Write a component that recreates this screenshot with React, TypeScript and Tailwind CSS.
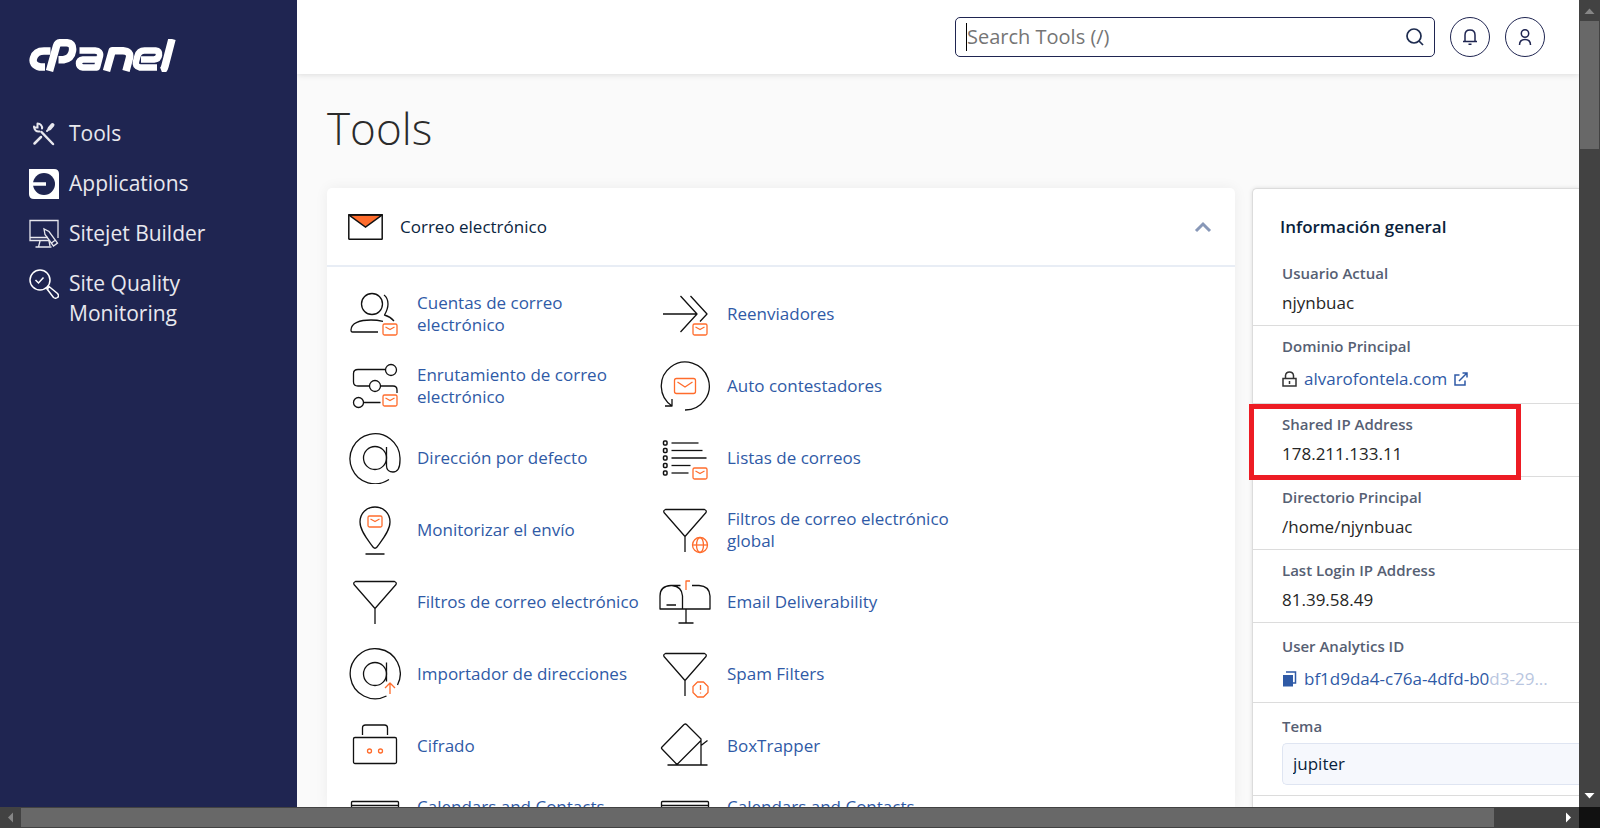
import React from 'react';

const MiniMail: React.FC<{ x: number; y: number }> = ({ x, y }) => (
    <g stroke="#ff6c2c">
        <rect x={x} y={y} width="14" height="11" rx="1.5" />
        <path d={`M${x + 2.5} ${y + 3}l4.5 2.5 4.5-2.5`} />
    </g>
);

const funnel = 'M5.500 4.500h39q2.500 1 1.500 3L25 31.500 4 7.500q-1-2 1.500-3zM25 31.500V47';

const icons: Record<string, React.ReactNode> = {
    accounts: (
        <>
            <circle cx="22" cy="15" r="10.500" />
            <path d="M28 43H2.500q-1.500 0-1.500-2C1 34 10 31 21 31q6 0 12 1.300M34 6q4 3 4 9 0 5-3.500 11Q40 27.500 44 32" />
            <MiniMail x={33} y={35} />
        </>
    ),
    routing: (
        <>
            <circle cx="41" cy="9" r="5.500" />
            <circle cx="25" cy="25" r="5.500" />
            <circle cx="8.500" cy="41.500" r="5" />
            <path d="M35.500 8.500H8q-4.500 0-4.500 4V21q0 4 4.500 4h11.500M30.500 25H43q4 0 4 4v3M13.500 41.500h17" />
            <MiniMail x={33} y={34} />
        </>
    ),
    at: (
        <>
            <circle cx="25" cy="25" r="11.500" />
            <path d="M39 46.500a25 25 0 1 1 11-21.500v2c0 8-3 12-7 12-3.500 0-6.500-2-6.500-6V14" />
        </>
    ),
    track: (
        <>
            <path d="M25 2c8.500 0 15 6.500 15 15 0 9-8 18-13 25q-2 2.500-4 0C18 35 10 26 10 17 10 8.500 16.500 2 25 2zM15.500 49h19" />
            <MiniMail x={18} y={11} />
        </>
    ),
    filter: <path d={funnel} />,
    importer: (
        <>
            <circle cx="25" cy="25" r="11.500" />
            <path d="M36.500 13.500v19M36.500 47A25 25 0 1 1 47.500 36" />
            <path d="M40 45V34m-5 5 5-5 5 5" stroke="#ff6c2c" />
        </>
    ),
    encryption: (
        <>
            <rect x="3.500" y="16.500" width="43" height="26" rx="1.500" />
            <path d="M12.500 14V7q0-3 3-3h19q3 0 3 3v7" />
            <circle cx="19.500" cy="30" r="2" stroke="#ff6c2c" />
            <circle cx="30.500" cy="30" r="2" stroke="#ff6c2c" />
        </>
    ),
    calendar: (
        <>
            <rect x="1.500" y="8.500" width="47" height="36" rx="1" />
            <path d="M2 12.500h46" />
        </>
    ),
    forward: (
        <>
            <path d="M3 25h34M20.500 7 37 25 20.500 43M30.500 7 47 25l-7 7.500" />
            <MiniMail x={33} y={35} />
        </>
    ),
    auto: (
        <>
            <path d="M25 49a24 24 0 1 0-13-4M5 45h7v-7" />
            <rect x="14.500" y="17.500" width="21" height="15" rx="2" stroke="#ff6c2c" />
            <path d="m17.500 21 7.500 5 7.500-5" stroke="#ff6c2c" />
        </>
    ),
    lists: (
        <>
            {[10, 17.5, 25, 32.5, 40].map((y, i) => (
                <React.Fragment key={y}>
                    <rect x="3.500" y={y - 2} width="3.500" height="4" rx="1" strokeWidth="1.500" />
                    <path d={`M11.500 ${y}h${[27, 31, 35, 19, 17][i]}`} />
                </React.Fragment>
            ))}
            <MiniMail x={33} y={35} />
        </>
    ),
    globalFilter: (
        <>
            <path d={funnel} />
            <g stroke="#ff6c2c">
                <circle cx="40" cy="40" r="7.500" />
                <ellipse cx="40" cy="40" rx="3.500" ry="7.500" />
                <path d="M32.500 40h15" />
            </g>
        </>
    ),
    mailbox: (
        <>
            <path d="M20.500 8.500H11Q0 9 0 19v13h22.500V19Q22 9.500 12 8.500M22.500 32H50V19q-.5-10-11-10.500h-7M26 32v14M18.500 46h15M6.500 28H16" />
            <path d="M26 13V4h4" stroke="#ff6c2c" />
        </>
    ),
    spam: (
        <>
            <path d={funnel} />
            <path d="m37.500 33 6 0 4.500 4.500v6L43.500 48h-6L33 43.500v-6zM40.500 36v5M40.500 43.500v1" stroke="#ff6c2c" />
        </>
    ),
    trapper: <path d="M24 3.500 2 26q-1 1 0 2l15 15.500L41 19.500v24M24 3.500q1.500-1 2.500 0L41 18v6.500l6.500-5M7.500 44h40" />,
};

const tools = [
    { icon: 'accounts', label: 'Cuentas de correo electrónico' },
    { icon: 'forward', label: 'Reenviadores' },
    { icon: 'routing', label: 'Enrutamiento de correo electrónico' },
    { icon: 'auto', label: 'Auto contestadores' },
    { icon: 'at', label: 'Dirección por defecto' },
    { icon: 'lists', label: 'Listas de correos' },
    { icon: 'track', label: 'Monitorizar el envío' },
    { icon: 'globalFilter', label: 'Filtros de correo electrónico global' },
    { icon: 'filter', label: 'Filtros de correo electrónico' },
    { icon: 'mailbox', label: 'Email Deliverability' },
    { icon: 'importer', label: 'Importador de direcciones' },
    { icon: 'spam', label: 'Spam Filters' },
    { icon: 'encryption', label: 'Cifrado' },
    { icon: 'trapper', label: 'BoxTrapper' },
    { icon: 'calendar', label: 'Calendars and Contacts Configuration' },
    { icon: 'calendar', label: 'Calendars and Contacts Sharing' },
];

const navItems = [
    {
        label: 'Tools',
        icon: (
            <g stroke="#e8e8ee" strokeWidth="2" strokeLinecap="round">
                <path d="M12.500 13 24 25" strokeWidth="2.500" />
                <path d="M8.500 4.500c3 0 5 2.500 4.500 5M5 7.500c0 3.500 2.500 5.500 5.500 5M8.500 4.500v4H5" strokeWidth="2" />
                <path d="M5.500 24.500 12 18" strokeWidth="2.500" />
                <path d="M18 12l3-3" />
                <path d="m20.500 9.500 3-3.500" strokeWidth="4" />
            </g>
        ),
    },
    {
        label: 'Applications',
        icon: (
            <>
                <path d="M0 0h25q5 0 5 5v25H5q-5 0-5-5z" fill="#fff" />
                <circle cx="15" cy="15" r="11" fill="#1f2551" />
                <path d="M0 15h17" stroke="#fff" strokeWidth="3.500" />
            </>
        ),
    },
    {
        label: 'Sitejet Builder',
        icon: (
            <g stroke="#e8e8ee" strokeWidth="1.300">
                <path d="M20 21.500H1V1.500h28V19M1 18.500h18M11 22l-1.500 6M20 22l1 5M6.500 28h16" />
                <path d="m15 10 1 5.500 8.500 11.500 4-3L20 12.500zM22.500 24l4-3" />
            </g>
        ),
    },
    {
        label: 'Site Quality Monitoring',
        icon: (
            <g stroke="#fff" strokeWidth="1.500">
                <circle cx="11" cy="11" r="10" />
                <path d="m6.500 11 3 3 5-5.500M17.500 18.500l2 2" />
                <path d="m20 17.500 8.500 7q2 2.500 0 4t-4 0L18 20z" />
            </g>
        ),
    },
];

const InfoRow: React.FC<{ label: string; className: string; children: React.ReactNode }> = ({
    label,
    className,
    children,
}) => (
    <div className={`border-b border-[#dcdcdc] pl-[29px] ${className}`}>
        <dt className="text-[15px] leading-[22px] font-semibold text-[#566073]">{label}</dt>
        <dd className="text-[17px] leading-[26px] text-[#262626]">{children}</dd>
    </div>
);

const Logo = () => (
    <svg viewBox="0 0 147 33" className="h-[33px] w-[147px]" fill="none" stroke="#fff" strokeWidth="7.500" strokeLinejoin="round" role="img" aria-label="cPanel">
        <path d="M21.500 12H15Q6.500 12 4.500 19T11 28h5" />
        <path d="M20.500 32 27.500 7q1-3.300 4-3.300h6q7 .3 6 8t-9 9h-5" />
        <path d="M50.500 11.500H66q6 .5 5 5.500l-3 11.500H54q-4-.5-4-4t4-4h15" strokeWidth="6.500" />
        <path d="M77.500 32l5.700-20.200H94q8 .7 6.500 7L97 32" />
        <path d="M128 28.500h-17q-5-1-4-6l1.500-5.500q1.500-5.500 7-5.500h11q4 .5 3.500 4.500t-5 4.500h-13" strokeWidth="6.500" />
        <path d="M132.500 32q2.500-1 3.500-5L143 0" />
    </svg>
);

const App: React.FC = () => {
    return (
        <div className="flex h-screen flex-col overflow-hidden bg-[#fafafa] font-['Open_Sans','Noto_Sans',sans-serif]">
            <div className="flex min-h-0 flex-1">
                <aside className="w-[297px] shrink-0 bg-[#1f2551] pt-[39px] pl-[29px]">
                    <a href="#home" className="block">
                        <Logo />
                    </a>
                    <nav className="mt-[46px] flex flex-col gap-[19px]">
                        {navItems.map((item) => (
                            <a key={item.label} href="#nav" className="flex gap-[10px] pr-16 text-[21px] leading-[30px] text-[#e8e8ee]">
                                <svg viewBox="0 0 30 30" className="mt-px size-[30px] shrink-0" fill="none">
                                    {item.icon}
                                </svg>
                                <span>{item.label}</span>
                            </a>
                        ))}
                    </nav>
                </aside>

                <div className="flex min-w-0 flex-1 flex-col overflow-hidden">
                    <header className="z-10 flex h-[74px] shrink-0 items-center justify-end gap-[15px] bg-white pr-[34px] shadow-[0_1px_6px_rgba(0,0,0,0.12)]">
                        <label className="flex h-10 w-[480px] items-center rounded-[5px] border border-[#1f2551] bg-white px-[10px]">
                            <span className="h-7 w-px bg-black" />
                            <input
                                type="text"
                                aria-label="Search Tools"
                                placeholder="Search Tools (/)"
                                className="min-w-0 flex-1 text-[20px] outline-none placeholder:text-[#757575]"
                            />
                            <svg viewBox="0 0 18 18" className="size-[18px]" fill="none" stroke="#1d2b4f" strokeWidth="1.700">
                                <circle cx="8" cy="8" r="7" />
                                <path d="m13 13 4 4" />
                            </svg>
                        </label>
                        <button type="button" aria-label="Notifications" className="grid size-10 place-items-center rounded-full border border-[#1f2551]">
                            <svg viewBox="0 0 16 16" className="size-4" fill="none" stroke="#1f2551" strokeWidth="1.500">
                                <path d="M1 12.500h14M3 12V6q0-5 5-5t5 5v6M6.500 15.300h3" />
                            </svg>
                        </button>
                        <button type="button" aria-label="Account" className="grid size-10 place-items-center rounded-full border border-[#1f2551]">
                            <svg viewBox="0 0 16 16" className="size-4" fill="none" stroke="#1f2551" strokeWidth="1.500">
                                <circle cx="8" cy="4.500" r="3.700" />
                                <path d="M2.500 16q0-5.500 5.500-5.500t5.500 5.500" />
                            </svg>
                        </button>
                    </header>

                    <main className="flex min-h-0 flex-1 flex-col pl-[30px]">
                        <h1 className="mt-[24px] text-[44px] leading-[60px] font-light text-[#2b2b2b]">Tools</h1>
                        <div className="mt-[30px] flex min-h-0 flex-1 gap-[17px]">
                            <section className="min-w-0 flex-1 rounded-t-[5px] bg-white shadow-[0_0_14px_rgba(0,0,0,0.06)]">
                                <div className="flex h-[79px] items-center border-b-2 border-[#e8edf5] pr-[23px] pl-[21px]">
                                    <svg viewBox="0 0 35 26" className="h-[26px] w-[35px]" fill="none" stroke="#111" strokeWidth="1.500">
                                        <path d="M1 1h33L17.500 13z" fill="#ff6c2c" />
                                        <rect x=".8" y=".8" width="33.400" height="24.400" rx=".5" />
                                    </svg>
                                    <h2 className="ml-[17px] flex-1 text-[17px] text-[#0a2540]">Correo electrónico</h2>
                                    <button type="button" aria-label="Collapse">
                                        <svg viewBox="0 0 18 12" className="h-3 w-[18px]" fill="none" stroke="#8898b8" strokeWidth="3">
                                            <path d="m2 10 7-7 7 7" />
                                        </svg>
                                    </button>
                                </div>
                                <ul className="grid grid-cols-[repeat(2,310px)] pt-[11px] pl-[22px]">
                                    {tools.map((tool, i) => (
                                        <li key={i}>
                                            <a href="#tool" className="flex h-[72px] items-center gap-4 pr-4 text-[17px] leading-[22px] text-[#2f5aa6]">
                                                <svg viewBox="-1 -1 52 52" className="size-[52px] shrink-0" fill="none" stroke="#111" strokeWidth="1.300" strokeLinejoin="round">
                                                    {icons[tool.icon]}
                                                </svg>
                                                <span>{tool.label}</span>
                                            </a>
                                        </li>
                                    ))}
                                </ul>
                            </section>

                            <section className="w-[327px] shrink-0 rounded-tl-[5px] border-t border-l border-[#dcdcdc] bg-white shadow-[0_0_4px_rgba(0,0,0,0.12)]">
                                <h2 className="mt-[25px] pl-[27px] text-[17px] leading-[26px] font-semibold text-[#0a1f3c]">Información general</h2>
                                <dl className="mt-[13px]">
                                    <InfoRow label="Usuario Actual" className="pt-[9px] pb-[9px] [&>dd]:mt-[6px]">
                                        njynbuac
                                    </InfoRow>
                                    <InfoRow label="Dominio Principal" className="pt-[9px] pb-[11px] [&>dd]:mt-[9px]">
                                        <a href="#domain" className="flex items-center gap-[7px] text-[#2f5aa6]">
                                            <svg viewBox="0 0 15 16" className="h-4 w-[15px]" fill="none" stroke="#333" strokeWidth="1.500">
                                                <path d="M1 7.500h13V15H1zM3.500 7V4.500Q4 1 7.500 1t4 3.500V7M7.500 10v3" />
                                            </svg>
                                            alvarofontela.com
                                            <svg viewBox="0 0 14 14" className="size-[14px]" fill="none" stroke="#2f5aa6" strokeWidth="1.500">
                                                <path d="M5.500 3H1v10h10V8.500M5 9l8-8M8.500 1H13v4.500" />
                                            </svg>
                                        </a>
                                    </InfoRow>
                                    <div className="relative">
                                        <InfoRow label="Shared IP Address" className="pt-[9px] pb-[9px] [&>dd]:mt-[6px]">
                                            178.211.133.11
                                        </InfoRow>
                                        <div className="absolute top-0 -left-1 h-[76px] w-[272px] border-[5px] border-[#ed1c24]" />
                                    </div>
                                    <InfoRow label="Directorio Principal" className="pt-[9px] pb-[9px] [&>dd]:mt-[6px]">
                                        /home/njynbuac
                                    </InfoRow>
                                    <InfoRow label="Last Login IP Address" className="pt-[9px] pb-[9px] [&>dd]:mt-[6px]">
                                        81.39.58.49
                                    </InfoRow>
                                    <InfoRow label="User Analytics ID" className="pt-[12px] pb-[10px] [&>dd]:mt-[9px]">
                                        <button type="button" className="flex items-center gap-[7px] text-[#2f5aa6]">
                                            <svg viewBox="0 0 15 16" className="h-4 w-[15px]" fill="#2f5aa6">
                                                <path d="M1 4h10v11.500H1z" />
                                                <path d="M4 1h9.500v11H11" fill="none" stroke="#2f5aa6" strokeWidth="1.500" />
                                            </svg>
                                            <span>
                                                bf1d9da4-c76a-4dfd-b0<span className="text-[#b9c6e0]">d3-29...</span>
                                            </span>
                                        </button>
                                    </InfoRow>
                                </dl>
                                <div className="border-b border-[#dcdcdc] pt-[12px] pb-[10px] pl-[29px]">
                                    <label htmlFor="theme" className="block text-[15px] leading-[22px] font-semibold text-[#566073]">
                                        Tema
                                    </label>
                                    <select
                                        id="theme"
                                        className="mt-[6px] block h-[42px] w-full appearance-none rounded-l-[5px] border border-r-0 border-[#dfe5f2] bg-[#f6f8fd] px-[10px] text-[17px] text-[#0a1f3c]"
                                    >
                                        <option>jupiter</option>
                                    </select>
                                </div>
                            </section>
                        </div>
                    </main>
                </div>

                <div className="flex w-[21px] shrink-0 flex-col items-center bg-[#424242]">
                    <svg viewBox="0 0 21 21" className="size-[21px]">
                        <path d="M5.500 14h10l-5-5.500z" fill="#868686" />
                    </svg>
                    <div className="h-32 w-[19px] bg-[#686868]" />
                    <svg viewBox="0 0 21 21" className="mt-auto size-[21px]">
                        <path d="M5.500 7h10l-5 5.500z" fill="#fff" />
                    </svg>
                </div>
            </div>

            <div className="flex h-[21px] shrink-0 items-center bg-[#424242]">
                <svg viewBox="0 0 21 21" className="size-[21px]">
                    <path d="M13 5.500v10l-5-5z" fill="#868686" />
                </svg>
                <div className="flex-1 pr-16">
                    <div className="h-[19px] bg-[#686868]" />
                </div>
                <svg viewBox="0 0 21 21" className="size-[21px]">
                    <path d="M8 5.500v10l5-5z" fill="#fff" />
                </svg>
                <div className="size-[21px] bg-[#111]" />
            </div>
        </div>
    );
};

export default App;
